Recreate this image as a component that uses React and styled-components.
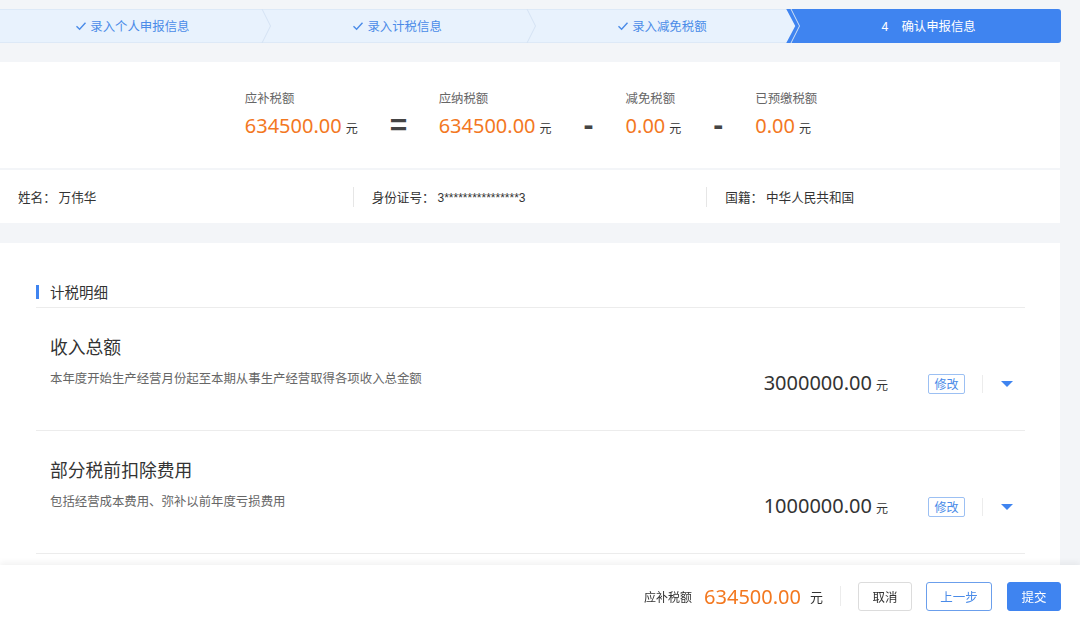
import React from 'react';
import styled, { createGlobalStyle } from 'styled-components';

const GlobalStyle = createGlobalStyle`
  html, body {
    margin: 0;
    padding: 0;
    background: #f3f5f8;
    overflow: hidden;
    font-family: "Noto Sans CJK SC", "Noto Sans", sans-serif;
    color: #333;
  }
  * { box-sizing: border-box; }
`;

const BLUE = '#3f84f0';
const ORANGE = '#f3781f';

const Page = styled.div`
  width: 1060px;
  padding-top: 9px;
`;

/* Steps */
const StepBar = styled.div`
  display: flex;
  width: 1061px;
  height: 34px;
  background: #e8f2fd;
  border-top: 1px solid #dde9f7;
  border-bottom: 1px solid #dde9f7;
  border-radius: 0 3px 3px 0;
  margin-bottom: 19px;
`;

const Step = styled.div`
  position: relative;
  flex: 1;
  display: flex;
  align-items: center;
  justify-content: center;
  gap: 3px;
  font-size: 12.4px;
  color: ${p => (p.$active ? '#fff' : '#4a8be8')};
  background: ${p => (p.$active ? BLUE : 'transparent')};
  margin: ${p => (p.$active ? '-1px 0 -1px -8px' : '0')};
  border-radius: ${p => (p.$active ? '0 3px 3px 0' : '0')};
  clip-path: ${p => (p.$active ? 'polygon(0 0, 100% 0, 100% 100%, 0 100%, 9px 50%)' : 'none')};
  padding-left: ${p => (p.$active ? '10px' : '0')};
`;

const StepNo = styled.span`
  margin-right: 10px;
`;

const Chevron = styled.svg`
  position: absolute;
  right: -7px;
  top: -1px;
  z-index: 1;
`;

const Check = () => (
  <svg width="12" height="12" viewBox="0 0 12 12">
    <polyline points="1.5,6.2 4.6,9.2 10.5,2.8" fill="none" stroke="#4a8be8" strokeWidth="1.4" />
  </svg>
);

/* Summary */
const Card = styled.div`
  background: #fff;
  margin-top: ${p => p.$gap || 0}px;
`;

const Summary = styled(Card)`
  height: 106px;
  display: flex;
  justify-content: center;
  align-items: flex-start;
  padding-top: 26px;
  padding-left: 2px;
`;

const SumItem = styled.div`
  display: flex;
  flex-direction: column;
`;

const SumLabel = styled.div`
  font-size: 12.4px;
  line-height: 20px;
  color: #666;
`;

const SumValue = styled.div`
  margin-top: 4px;
  line-height: 28px;
  display: flex;
  align-items: baseline;
`;

const Money = styled.span`
  font-size: 20px;
  color: ${p => p.$color || ORANGE};
  font-family: "Noto Sans", "Open Sans", sans-serif;
`;

const Unit = styled.span`
  font-size: ${p => p.$size || 12}px;
  color: #333;
  margin-left: ${p => p.$ml || 4}px;
`;

const Operator = styled.div`
  margin: 23px 32px 0;
  font-size: 30px;
  font-weight: 700;
  line-height: 28px;
  color: #444;
  width: ${p => p.$w}px;
  text-align: center;
  font-family: "Liberation Sans", sans-serif;
`;

/* Info row */
const Info = styled(Card)`
  height: 53px;
  display: flex;
  align-items: center;
`;

const InfoCell = styled.div`
  flex: 1;
  font-size: 12.6px;
  color: #333;
  padding-left: 18px;
  height: 20px;
  line-height: 20px;
  border-left: ${p => (p.$first ? 'none' : '1px solid #e6e6e6')};
`;

const Masked = styled.span`
  font-family: "Liberation Sans", sans-serif;
  font-size: 12px;
`;

/* Detail */
const Detail = styled(Card)`
  padding: 38px 35px 70px 36px;
`;

const SectionTitle = styled.div`
  display: flex;
  align-items: center;
  font-size: 14.5px;
  line-height: 22px;
  padding-bottom: 4px;
  border-bottom: 1px solid #ececec;
  &::before {
    content: '';
    width: 3px;
    height: 14px;
    background: ${BLUE};
    margin-right: 11px;
  }
`;

const Row = styled.div`
  display: flex;
  align-items: flex-start;
  height: 123px;
  padding: 25px 12px 0 14px;
  border-bottom: 1px solid #ececec;
`;

const RowMain = styled.div`
  flex: 1;
`;

const RowTitle = styled.div`
  font-size: 17.8px;
  line-height: 26px;
  color: #333;
`;

const RowDesc = styled.div`
  margin-top: 9px;
  font-size: 12.4px;
  line-height: 20px;
  color: #666;
`;

const RowRight = styled.div`
  display: flex;
  align-items: center;
  margin-top: 36px;
`;

const Amount = styled.div`
  display: flex;
  align-items: baseline;
  line-height: 28px;
`;

const EditBtn = styled.button`
  margin-left: 40px;
  width: 37px;
  height: 20px;
  padding: 0;
  font-size: 12px;
  font-family: inherit;
  line-height: 18px;
  color: #4a8be8;
  background: #fff;
  border: 1px solid #9cc0f3;
  border-radius: 2px;
`;

const VLine = styled.span`
  display: inline-block;
  width: 1px;
  height: ${p => p.$h || 18}px;
  background: #ececec;
  margin: 0 ${p => p.$m || 17}px;
`;

const Caret = styled.span`
  width: 0;
  height: 0;
  border-left: 6px solid transparent;
  border-right: 6px solid transparent;
  border-top: 6px solid ${BLUE};
  margin-left: 1px;
`;

/* Footer */
const Footer = styled.div`
  position: fixed;
  left: 0;
  right: 0;
  bottom: 0;
  height: 62px;
  background: #fff;
  box-shadow: 0 -3px 6px rgba(0, 0, 0, 0.05);
  display: flex;
  align-items: center;
  justify-content: flex-end;
  padding-right: 19px;
`;

const FootLabel = styled.span`
  font-size: 12px;
  color: #333;
  margin-right: 12px;
`;

const Button = styled.button`
  height: 29px;
  width: ${p => p.$w || 54}px;
  padding: 0;
  margin-left: ${p => p.$ml || 0}px;
  font-size: 12.5px;
  font-family: inherit;
  border-radius: 3px;
  border: 1px solid ${p => (p.$variant === 'primary' ? BLUE : p.$variant === 'outline' ? '#6b9fec' : '#dcdcdc')};
  background: ${p => (p.$variant === 'primary' ? BLUE : '#fff')};
  color: ${p => (p.$variant === 'primary' ? '#fff' : p.$variant === 'outline' ? '#4a8be8' : '#333')};
`;

const steps = ['录入个人申报信息', '录入计税信息', '录入减免税额'];

const rows = [
  { title: '收入总额', desc: '本年度开始生产经营月份起至本期从事生产经营取得各项收入总金额', amount: '3000000.00' },
  { title: '部分税前扣除费用', desc: '包括经营成本费用、弥补以前年度亏损费用', amount: '1000000.00' },
];

export default function App() {
  return (
    <>
      <GlobalStyle />
      <Page>
        <StepBar>
          {steps.map(s => (
            <Step key={s}>
              <Check />
              {s}
              <Chevron width="11" height="34" viewBox="0 0 11 34">
                <polyline points="1,0 9.5,17 1,34" fill="none" stroke="#d4e2f3" strokeWidth="1" />
              </Chevron>
            </Step>
          ))}
          <Step $active>
            <StepNo>4</StepNo>确认申报信息
          </Step>
        </StepBar>

        <Summary>
          <SumItem>
            <SumLabel>应补税额</SumLabel>
            <SumValue><Money>634500.00</Money><Unit>元</Unit></SumValue>
          </SumItem>
          <Operator $w={17}>=</Operator>
          <SumItem>
            <SumLabel>应纳税额</SumLabel>
            <SumValue><Money>634500.00</Money><Unit>元</Unit></SumValue>
          </SumItem>
          <Operator $w={10}>-</Operator>
          <SumItem>
            <SumLabel>减免税额</SumLabel>
            <SumValue><Money>0.00</Money><Unit>元</Unit></SumValue>
          </SumItem>
          <Operator $w={10}>-</Operator>
          <SumItem>
            <SumLabel>已预缴税额</SumLabel>
            <SumValue><Money>0.00</Money><Unit>元</Unit></SumValue>
          </SumItem>
        </Summary>

        <Info $gap={2}>
          <InfoCell $first>姓名：&nbsp;万伟华</InfoCell>
          <InfoCell>身份证号：&nbsp;<Masked>3****************3</Masked></InfoCell>
          <InfoCell>国籍：&nbsp;中华人民共和国</InfoCell>
        </Info>

        <Detail $gap={20}>
          <SectionTitle>计税明细</SectionTitle>
          {rows.map(r => (
            <Row key={r.title}>
              <RowMain>
                <RowTitle>{r.title}</RowTitle>
                <RowDesc>{r.desc}</RowDesc>
              </RowMain>
              <RowRight>
                <Amount><Money $color="#333">{r.amount}</Money><Unit $ml={4}>元</Unit></Amount>
                <EditBtn>修改</EditBtn>
                <VLine />
                <Caret />
              </RowRight>
            </Row>
          ))}
        </Detail>
      </Page>

      <Footer>
        <FootLabel>应补税额</FootLabel>
        <Money>634500.00</Money>
        <Unit $size={13} $ml={9}>元</Unit>
        <VLine $m={17} $h={20} />
        <Button>取消</Button>
        <Button $variant="outline" $ml={14} $w={66}>上一步</Button>
        <Button $variant="primary" $ml={15}>提交</Button>
      </Footer>
    </>
  );
}
